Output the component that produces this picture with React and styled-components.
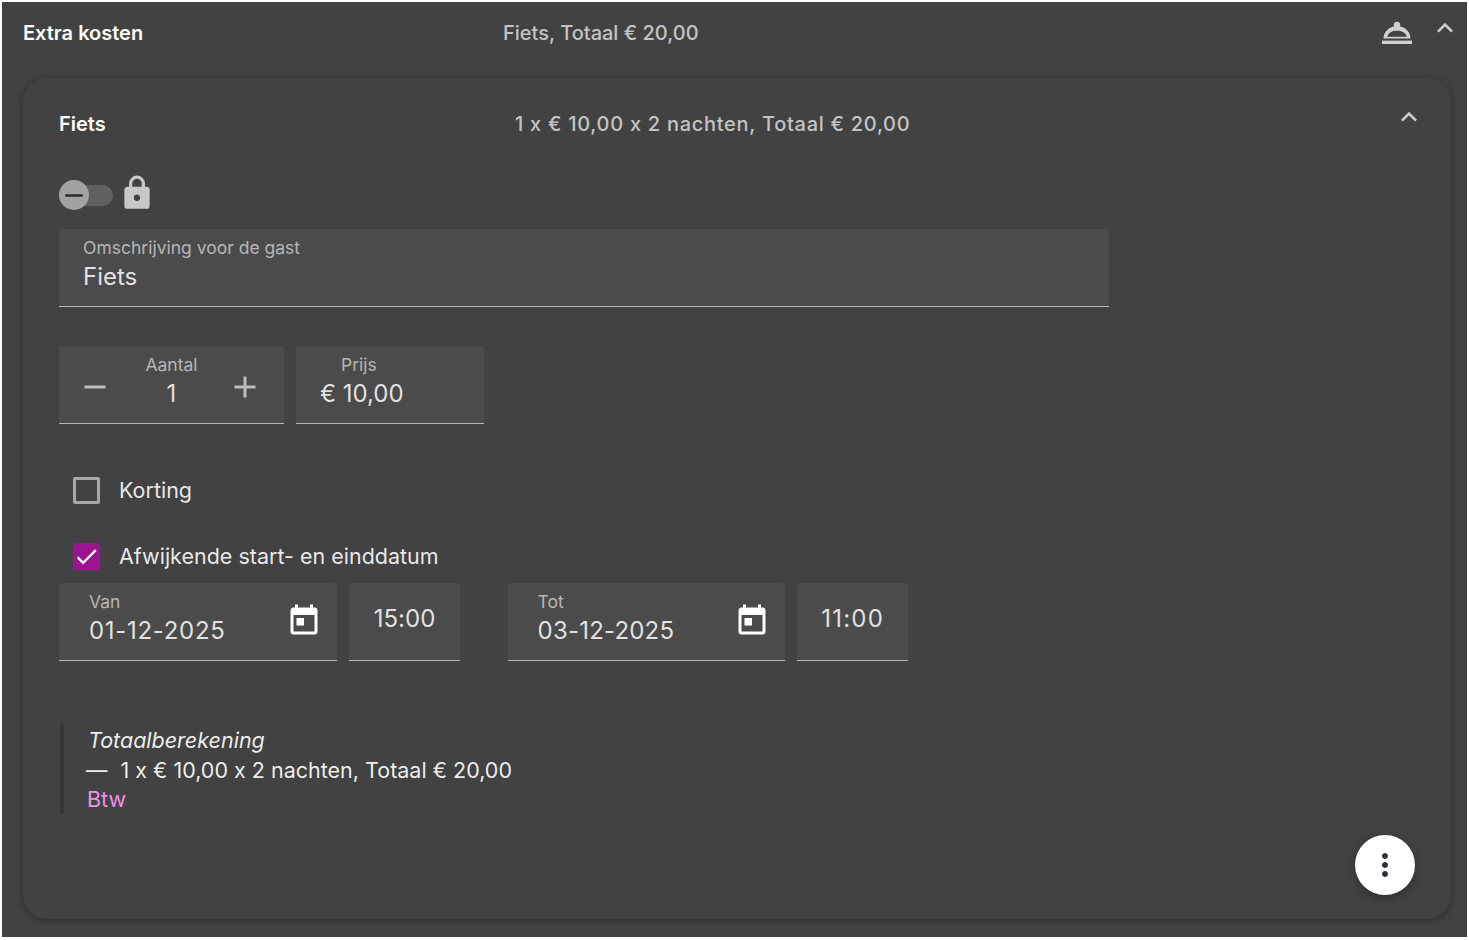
import React from "react";
import styled, { createGlobalStyle } from "styled-components";
import { MdExpandLess, MdRemove, MdAdd, MdMoreVert } from "react-icons/md";

const Global = createGlobalStyle`
  html, body { margin: 0; padding: 0; background: #fff; }
  body {
    font-family: "Inter", "Noto Sans", sans-serif;
    color: #fff;
    font-feature-settings: "calt" 0;
  }
  * { box-sizing: border-box; }
`;
const Page = styled.div`
  margin: 2px 2px 0;
  height: 935px;
  background: #424242;
  padding: 0 16px 0 21px;
  display: flex;
  flex-direction: column;
`;
const Header = styled.div`
  height: 76px;
  display: grid;
  grid-template-columns: 480px 1fr 36px 36px;
  align-items: start;
`;
const Title = styled.div`
  font-size: 20px;
  font-weight: 600;
  line-height: 26px;
  padding-top: ${p => p.$pt}px;
`;
const Summary = styled.div`
  font-size: 20px;
  font-weight: 500;
  line-height: 26px;
  letter-spacing: ${p => p.$ls}px;
  padding-top: ${p => p.$pt}px;
  color: rgba(255,255,255,.7);
`;
const Card = styled.div`
  position: relative;
  height: 841px;
  border-radius: 24px;
  background: #424242;
  box-shadow: 0 2px 6px rgba(0,0,0,.2), 0 0 10px rgba(0,0,0,.12);
  padding: 0 36px;
`;
const CardHead = styled.div`
  height: 87px;
  display: grid;
  grid-template-columns: 456px 1fr 22px;
`;
const Field = styled.div`
  background: rgba(255,255,255,.05);
  border-bottom: 1px solid rgba(255,255,255,.6);
  border-radius: 4px 4px 0 0;
  height: 78px;
  position: relative;
  flex: none;
  width: ${p => p.$w}px;
`;
const Label = styled.div`
  font-size: 17.5px;
  line-height: 22px;
  color: rgba(255,255,255,.6);
  text-align: ${p => p.$center ? "center" : "left"};
  padding-top: 8px;
  padding-left: ${p => p.$pl || 0}px;
`;
const Value = styled.div`
  font-size: 24px;
  line-height: 32px;
  margin-top: 2px;
  letter-spacing: ${p => p.$ls || 0}px;
  color: rgba(255,255,255,.85);
  padding-left: ${p => p.$pl || 0}px;
  text-align: ${p => p.$center ? "center" : "left"};
`;
const ToggleRow = styled.div`
  height: 64px;
  padding-top: 20px;
  display: flex;
  align-items: flex-start;
  gap: 7px;
`;
const Track = styled.div`
  width: 54px; height: 21px; border-radius: 11px;
  background: #616161;
  position: relative;
`;
const Thumb = styled.div`
  position: absolute; left: 0; top: -5px;
  width: 30px; height: 30px; border-radius: 50%;
  background: #a2a2a2;
  display: flex; align-items: center; justify-content: center;
  color: #2a2a2a;
`;
const Row = styled.div`
  display: flex;
  gap: 12px;
  margin-top: ${p => p.$mt || 0}px;
`;
const IconBtn = styled.div`
  position: absolute;
  top: 23px;
  left: ${p => p.$left}px;
  color: #bdbdbd;
  display: flex;
`;
const Check = styled.div`
  display: flex;
  align-items: center;
  height: 30px;
  margin-top: ${p => p.$mt}px;
  margin-left: 14px;
  gap: 19px;
  font-size: 21.5px;
  color: rgba(255,255,255,.9);
`;
const Box = styled.div`
  width: 27px; height: 27px;
  border-radius: 2px;
  border: ${p => p.$on ? "none" : "3px solid #a8a8a8"};
  background: ${p => p.$on ? "#9c1590" : "transparent"};
  display: flex; align-items: center; justify-content: center;
`;
const Spacer = styled.div`width: ${p => p.$w}px; flex: none;`;
const Cal = styled.svg`
  position: absolute; right: 15px; top: 19.5px; width: 36px; height: 36px; fill: #fff;
`;
const Time = styled.div`
  font-size: 24px;
  letter-spacing: ${p => p.$ls || 0}px;
  color: rgba(255,255,255,.85);
  line-height: 32px;
  text-align: center;
  padding-top: 20px;
`;
const Calc = styled.div`
  margin-top: 63px;
  margin-left: 1px;
  border-left: 4px solid #363636;
  padding: 1px 0 0 24px;
  height: 90px;
  font-size: 21.5px;
  line-height: 30px;
  color: rgba(255,255,255,.92);
`;
const Italic = styled.div`font-style: italic;`;
const Btw = styled.div`color: #f090e8; margin: -1px 0 0 -1px;`;
const Dash = styled.span`margin: 0 13px 0 -2px;`;
const Fab = styled.div`
  position: absolute;
  right: 36px; bottom: 24px;
  width: 60px; height: 60px; border-radius: 50%;
  background: #fff; color: #2b3040;
  display: flex; align-items: center; justify-content: center;
  box-shadow: 0 3px 8px rgba(0,0,0,.3);
`;
const Chevron = styled.div`
  color: #ccc; display: flex; margin-top: ${p => p.$mt}px; margin-left: ${p => p.$ml}px;
  svg { flex: none; }
`;
const BellIcon = styled.svg`
  width: 36px; height: 36px; fill: #d0d0d0; margin-top: 15px; display: block;
`;
const LockIcon = styled.svg`
  width: 38px; height: 38px; fill: #c8c8c8; margin: -11px 0 0 -2px; flex: none;
`;
const CheckIcon = styled.svg`
  width: 27px; height: 27px; fill: #fff;
`;

const CalendarToday = () => (
  <Cal viewBox="0 0 24 24"><path d="M7,10H12V15H7M19,19H5V8H19M19,3H18V1H16V3H8V1H6V3H5C3.89,3 3,3.9 3,5V19A2,2 0 0,0 5,21H19A2,2 0 0,0 21,19V5A2,2 0 0,0 19,3Z" /></Cal>
);

export default function App() {
  return (
    <Page>
      <Global />
      <Header>
        <Title $pt={18}>Extra kosten</Title>
        <Summary $pt={18} $ls={0}>Fiets, Totaal € 20,00</Summary>
        <BellIcon viewBox="0 0 36 36">
          <circle cx="18" cy="8" r="3.2" />
          <path fillRule="evenodd" d="M4.5 21.5A13.5 12.5 0 0 1 31.5 21.5ZM8 19.7H28A10.5 8.5 0 0 0 8 19.7Z" />
          <rect x="3" y="23.6" width="30" height="3.4" />
        </BellIcon>
        <Chevron $mt={10} $ml={14}><MdExpandLess size={32} /></Chevron>
      </Header>
      <Card>
        <CardHead>
          <Title $pt={33}>Fiets</Title>
          <Summary $pt={33} $ls={0.72}>1 x € 10,00 x 2 nachten, Totaal € 20,00</Summary>
          <Chevron $mt={23} $ml={0}><MdExpandLess size={32} /></Chevron>
        </CardHead>
        <ToggleRow>
          <Track><Thumb><MdRemove size={33} /></Thumb></Track>
          <LockIcon viewBox="0 0 24 24"><path d="M12,17A2,2 0 0,0 14,15C14,13.89 13.1,13 12,13A2,2 0 0,0 10,15A2,2 0 0,0 12,17M18,8A2,2 0 0,1 20,10V20A2,2 0 0,1 18,22H6A2,2 0 0,1 4,20V10C4,8.89 4.9,8 6,8H7V6A5,5 0 0,1 12,1A5,5 0 0,1 17,6V8H18M12,3A3,3 0 0,0 9,6V8H15V6A3,3 0 0,0 12,3Z" /></LockIcon>
        </ToggleRow>
        <Field $w={1050}>
          <Label $pl={24}>Omschrijving voor de gast</Label>
          <Value $pl={24}>Fiets</Value>
        </Field>
        <Row $mt={39}>
          <Field $w={225}>
            <Label $center>Aantal</Label>
            <Value $center>1</Value>
            <IconBtn $left={18}><MdRemove size={36} /></IconBtn>
            <IconBtn $left={168}><MdAdd size={36} /></IconBtn>
          </Field>
          <Field $w={188}>
            <Label $pl={45}>Prijs</Label>
            <Value $pl={24}>€ 10,00</Value>
          </Field>
        </Row>
        <Check $mt={51}><Box />Korting</Check>
        <Check $mt={36}><Box $on><CheckIcon viewBox="0 0 24 24"><path d="M21,7L9,19L3.5,13.5L4.91,12.09L9,16.17L19.59,5.59L21,7Z" /></CheckIcon></Box>Afwijkende start- en einddatum</Check>
        <Row $mt={12}>
          <Field $w={278}>
            <Label $pl={30}>Van</Label>
            <Value $pl={30} $ls={0.7}>01-12-2025</Value>
            <CalendarToday />
          </Field>
          <Field $w={111}><Time>15:00</Time></Field>
          <Spacer $w={23.6} />
          <Field $w={277.6}>
            <Label $pl={30}>Tot</Label>
            <Value $pl={30} $ls={0.2}>03-12-2025</Value>
            <CalendarToday />
          </Field>
          <Field $w={111}><Time $ls={1.2}>11:00</Time></Field>
        </Row>
        <Calc>
          <Italic>Totaalberekening</Italic>
          <div><Dash>—</Dash>1 x € 10,00 x 2 nachten, Totaal € 20,00</div>
          <Btw>Btw</Btw>
        </Calc>
        <Fab><MdMoreVert size={36} /></Fab>
      </Card>
    </Page>
  );
}
